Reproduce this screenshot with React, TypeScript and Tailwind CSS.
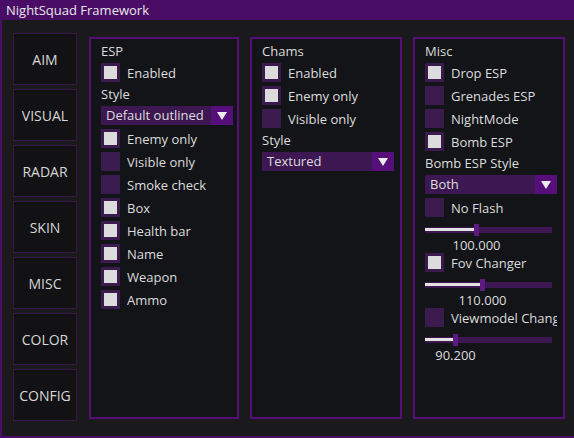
import React from "react";

const tabs = ["AIM", "VISUAL", "RADAR", "SKIN", "MISC", "COLOR", "CONFIG"];

const Label: React.FC<{ text: string }> = ({ text }) => (
  <div className="h-4 leading-4 whitespace-nowrap">{text}</div>
);

const Check: React.FC<{ label: string; checked?: boolean }> = ({ label, checked = false }) => (
  <div className="flex items-center h-[19px] gap-[7px] w-[132px] overflow-hidden whitespace-nowrap">
    <div className="w-[19px] h-[19px] shrink-0 bg-[#3b1a4e] flex items-center justify-center">
      {checked && <div className="w-[13px] h-[13px] bg-[#dcdcdc]" />}
    </div>
    <span className="leading-4">{label}</span>
  </div>
);

const Combo: React.FC<{ value: string }> = ({ value }) => (
  <div className="flex w-[132px] h-[19px]">
    <div className="flex-1 bg-[#3c1751] pl-[5px] leading-[19px] whitespace-nowrap overflow-hidden">{value}</div>
    <div className="w-[22px] bg-[#560e7a] flex items-center justify-center">
      <svg width="10" height="8" viewBox="0 0 10 8">
        <polygon points="0,0 10,0 5,8" fill="#ececec" />
      </svg>
    </div>
  </div>
);

// handle = px offset of the grab inside the track
const Slider: React.FC<{ value: string; handle: number }> = ({ value, handle }) => (
  <div className="relative w-[127px] h-[28px]">
    <div className="absolute left-0 right-0 top-[6px] h-[6px] bg-[#3c1751]" />
    <div className="absolute left-0 top-[7px] h-[3px] bg-[#e2e2e2]" style={{ width: handle }} />
    <div className="absolute top-[3px] w-[5px] h-[12px] bg-[#5e1a82]" style={{ left: handle }} />
    <div
      className="absolute top-[16px] h-4 leading-4 -translate-x-1/2 whitespace-nowrap"
      style={{ left: handle + 2.5 }}
    >
      {value}
    </div>
  </div>
);

const Panel: React.FC<{ width: string; children: React.ReactNode }> = ({ width, children }) => (
  <div className={`${width} h-[382px] border-2 border-[#560f77] bg-[#131418] pl-[10px] pt-[4px] overflow-hidden flex flex-col gap-1`}>
    {children}
  </div>
);

export default function App() {
  return (
    <div className="w-[574px] h-[438px] bg-[#1a1a1d] border-l-2 border-b-2 border-[#4a0d66] flex flex-col font-['Open_Sans',sans-serif] text-[13px] text-[#dcdcdc]">
      <div className="h-5 shrink-0 bg-[#4a0d66] pl-[4px] leading-5 text-[#e8e8e8]">NightSquad Framework</div>

      <div className="flex pl-[11px]">
        <div className="w-[64px] pt-[13px] flex flex-col gap-1">
          {tabs.map((t) => (
            <div
              key={t}
              className="h-[52px] border border-[#3a1549] bg-[#121215] flex items-center justify-center text-[14px] text-[#d6d6d6]"
            >
              {t}
            </div>
          ))}
        </div>

        <div className="ml-[12px] mt-[17px] flex gap-[11px]">
          <Panel width="w-[150px]">
            <Label text="ESP" />
            <Check label="Enabled" checked />
            <Label text="Style" />
            <Combo value="Default outlined" />
            <Check label="Enemy only" checked />
            <Check label="Visible only" />
            <Check label="Smoke check" />
            <Check label="Box" checked />
            <Check label="Health bar" checked />
            <Check label="Name" checked />
            <Check label="Weapon" checked />
            <Check label="Ammo" checked />
          </Panel>

          <Panel width="w-[152px]">
            <Label text="Chams" />
            <Check label="Enabled" checked />
            <Check label="Enemy only" checked />
            <Check label="Visible only" />
            <Label text="Style" />
            <Combo value="Textured" />
          </Panel>

          <Panel width="w-[152px]">
            <Label text="Misc" />
            <Check label="Drop ESP" checked />
            <Check label="Grenades ESP" />
            <Check label="NightMode" />
            <Check label="Bomb ESP" checked />
            <Label text="Bomb ESP Style" />
            <Combo value="Both" />
            <Check label="No Flash" />
            <Slider value="100.000" handle={49} />
            <Check label="Fov Changer" checked />
            <Slider value="110.000" handle={55} />
            <Check label="Viewmodel Changer" />
            <Slider value="90.200" handle={28} />
          </Panel>
        </div>
      </div>
    </div>
  );
}
